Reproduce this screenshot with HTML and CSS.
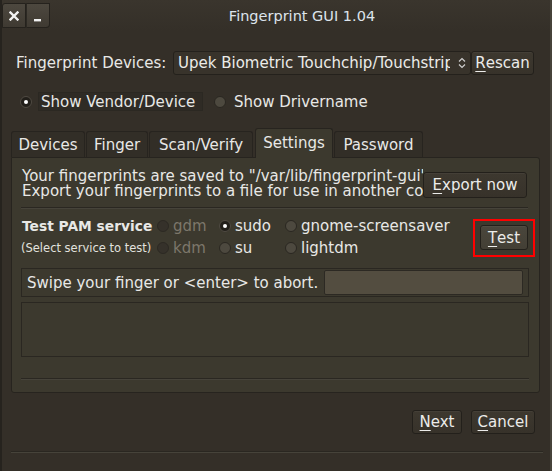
FILE: index.html
```html
<!DOCTYPE html>
<html>
<head>
<meta charset="utf-8">
<link rel="stylesheet" href="styles.css">
</head>
<body>
<div class="window">
  <div class="titlebar">
    <div class="tb-btns">
      <div class="tb-btn close">
        <svg width="10" height="10" viewBox="0 0 10 10"><path d="M1.5 1.5 L8.5 8.5 M8.5 1.5 L1.5 8.5" stroke="#f2f2f2" stroke-width="2.4" stroke-linecap="square"/></svg>
      </div>
      <div class="tb-btn min">
        <svg width="8" height="4" viewBox="0 0 8 4"><rect x="0" y="1" width="7" height="2.4" fill="#f2f2f2"/></svg>
      </div>
    </div>
    <div class="title">Fingerprint GUI 1.04</div>
  </div>

  <div class="body">
    <div class="dev-row">
      <span class="dev-label">Fingerprint Devices:</span>
      <div class="combo">
        <span class="combo-text">Upek Biometric Touchchip/Touchstrip</span>
        <svg class="combo-arrows" width="8" height="14" viewBox="0 0 8 14"><path d="M1 5.5 L4 2.5 L7 5.5" fill="none" stroke="#cfcfcf" stroke-width="1.2"/><path d="M1 8.5 L4 11.5 L7 8.5" fill="none" stroke="#cfcfcf" stroke-width="1.2"/></svg>
      </div>
      <div class="btn rescan"><u>R</u>escan</div>
    </div>

    <div class="radio-row">
      <span class="radio checked"></span><span class="radio-label focus">Show Vendor/Device</span>
      <span class="radio"></span><span class="radio-label">Show Drivername</span>
    </div>

    <div class="tabs">
      <div class="tab t-devices">Devices</div>
      <div class="tab t-finger">Finger</div>
      <div class="tab t-scan">Scan/Verify</div>
      <div class="tab active t-settings">Settings</div>
      <div class="tab t-password">Password</div>
    </div>

    <div class="tabpage">
      <div class="export-row">
        <div class="export-text">
          <div class="line">Your fingerprints are saved to "/var/lib/fingerprint-gui"</div>
          <div class="line">Export your fingerprints to a file for use in another computer</div>
        </div>
        <div class="btn export"><u>E</u>xport now</div>
      </div>
      <div class="hsep sep1"></div>

      <div class="pam-row">
        <div class="pam-grid">
          <div class="pam-title">Test PAM service</div>
          <div class="opt disabled"><span class="radio dis"></span><span>gdm</span></div>
          <div class="opt"><span class="radio checked"></span><span>sudo</span></div>
          <div class="opt"><span class="radio"></span><span>gnome-screensaver</span></div>
          <div class="pam-sub">(Select service to test)</div>
          <div class="opt disabled"><span class="radio dis"></span><span>kdm</span></div>
          <div class="opt"><span class="radio"></span><span>su</span></div>
          <div class="opt"><span class="radio"></span><span>lightdm</span></div>
        </div>
        <div class="test-wrap">
          <div class="btn test"><u>T</u>est</div>
        </div>
      </div>

      <div class="swipe-frame">
        <span class="swipe-text">Swipe your finger or &lt;enter&gt; to abort.</span>
        <div class="entry"></div>
      </div>

      <div class="frame-box"></div>

      <div class="hsep sep2"></div>
    </div>

    <div class="actions">
      <div class="btn next"><u>N</u>ext</div>
      <div class="btn cancel"><u>C</u>ancel</div>
    </div>
    <div class="hsep bottom-sep"></div>
  </div>
</div>
</body>
</html>
```

FILE: styles.css
```css
* { box-sizing: border-box; }
html, body {
  margin: 0;
  padding: 0;
  background: #332f28;
}
body {
  font-family: "DejaVu Sans", sans-serif;
  font-size: 15px;
  color: #e8e8e6;
}
.window {
  width: 552px;
  height: 471px;
  background: #342f28;
  border-left: 2px solid #26231e;
  border-right: 2px solid #46423a;
  overflow: hidden;
  display: flex;
  flex-direction: column;
}

/* title bar */
.titlebar {
  height: 31px;
  display: flex;
  align-items: flex-start;
  background: linear-gradient(#3a352d, #342f28);
  flex-shrink: 0;
}
.tb-btns {
  display: flex;
  margin-top: 3px;
}
.tb-btn {
  width: 24px;
  height: 25px;
  background: linear-gradient(#4d483f, #3f3a32);
  border: 1px solid #25221d;
  display: flex;
  align-items: center;
  justify-content: center;
}
.tb-btn.close { border-radius: 3px 0 0 0; width: 24px; }
.tb-btn.min { border-left: 1px solid #2c2923; border-radius: 0 0 4px 0; align-items: flex-end; padding-bottom: 5px; }
.title {
  flex: 1;
  text-align: center;
  margin-top: 8px;
  font-family: "DejaVu Sans", sans-serif;
  font-size: 14.5px;
  color: #dde4ec;
  padding-left: 4px;
}

.body {
  flex: 1;
  display: flex;
  flex-direction: column;
  padding-left: 9px;
}

/* devices row */
.dev-row {
  display: flex;
  align-items: center;
  margin-top: 20px;
  height: 24px;
}
.dev-label {
  margin-left: 5px;
  width: 157px;
  white-space: nowrap;
}
.combo {
  width: 298px;
  height: 24px;
  border: 1px solid #24211c;
  border-radius: 3px;
  background: #38332b;
  display: flex;
  align-items: center;
  padding-left: 4px;
  padding-right: 4px;
  overflow: hidden;
}
.combo-text {
  flex: 1;
  white-space: nowrap;
  overflow: hidden;
  color: #ecece9;
}
.combo-arrows { flex-shrink: 0; margin-left: 8px; }

.btn {
  height: 25px;
  border: 1px solid #23201b;
  border-radius: 3px;
  background: linear-gradient(#3d382f, #37322a);
  display: flex;
  align-items: center;
  justify-content: center;
  white-space: nowrap;
  color: #ececea;
  box-shadow: inset 0 1px 0 rgba(255,255,255,0.04);
  flex-shrink: 0;
}
.btn u { text-underline-offset: 3px; }
.rescan { width: 63px; height: 24px; }

/* radio row */
.radio-row {
  display: flex;
  align-items: center;
  margin-top: 17px;
  height: 19px;
}
.radio {
  display: inline-block;
  width: 12px;
  height: 12px;
  border-radius: 50%;
  background: #4d493f;
  border: 1px solid #2a2721;
  flex-shrink: 0;
  position: relative;
}
.radio.checked {
  background: #221f1a;
  border-color: #4f4a42;
}
.radio.checked::after {
  content: "";
  position: absolute;
  left: 3px;
  top: 3px;
  width: 4px;
  height: 4px;
  border-radius: 50%;
  background: #ffffff;
}
.radio.dis {
  background: #35312a;
  border-color: #2c2923;
}
.radio-row .radio:first-child { margin-left: 9px; }
.radio-label { white-space: nowrap; }
.radio-label.focus {
  margin-left: 6px;
  padding: 0 2px;
  height: 19px;
  line-height: 18px;
  background: #2f2b25;
  border: 1px solid #2b2822;
  width: 165px;
}
.radio-row .radio:nth-child(3) { margin-left: 11px; }
.radio-row .radio-label:last-child { margin-left: 8px; }

/* tabs */
.tabs {
  display: flex;
  align-items: flex-end;
  margin-top: 17px;
  height: 29px;
  position: relative;
  z-index: 1;
}
.tab {
  height: 26px;
  background: #322e27;
  border: 1px solid #27241f;
  border-bottom: none;
  border-radius: 3px 3px 0 0;
  display: flex;
  align-items: center;
  justify-content: center;
  margin-right: 1px;
  color: #e8e8e6;
  white-space: nowrap;
}
.tab.active {
  height: 30px;
  margin-bottom: -1px;
  background: #3c392e;
  padding-bottom: 2px;
}
.t-devices { width: 74px; }
.t-finger { width: 62px; }
.t-scan { width: 104px; }
.t-settings { width: 78px; margin-left: 1px; }
.t-password { width: 89px; }

.tabpage {
  width: 529px;
  height: 236px;
  background: #3c392e;
  border: 1px solid #27241f;
  border-radius: 0 3px 3px 3px;
  padding: 0 4px 0 9px;
  display: flex;
  flex-direction: column;
}

.export-row {
  display: flex;
  align-items: center;
  margin-top: 10px;
  height: 32px;
}
.export-text {
  width: 402px;
  overflow: hidden;
  white-space: nowrap;
  padding-left: 1px;
  flex-shrink: 0;
}
.export-text .line {
  height: 15.5px;
  line-height: 15.5px;
}
.export { width: 104px; height: 26px; margin-top: 1px; }

.hsep {
  height: 2px;
  border-top: 1px solid #2a2721;
  border-bottom: 1px solid #46433a;
  flex-shrink: 0;
}
.sep1 { margin-top: 7px; width: 507px; }

.pam-row {
  display: flex;
  align-items: center;
  margin-top: 8px;
  height: 40px;
}
.pam-grid {
  display: grid;
  grid-template-columns: 136px 62px 66px 170px;
  grid-template-rows: 21px 22px;
  align-items: center;
  flex-shrink: 0;
}
.pam-title {
  font-weight: bold;
  font-size: 13.8px;
  padding-left: 1px;
  white-space: nowrap;
}
.pam-sub {
  font-size: 11.5px;
  white-space: nowrap;
  color: #e2e2df;
}
.opt {
  display: flex;
  align-items: center;
  white-space: nowrap;
}
.opt .radio { margin-right: 4px; margin-left: 0px; }
.opt.disabled { color: #7c776b; }
.test-wrap {
  margin-left: 18px;
  width: 62px;
  height: 38px;
  border: 2px solid #ff0000;
  display: flex;
  align-items: center;
  justify-content: center;
  margin-top: 1px;
  flex-shrink: 0;
}
.test {
  width: 48px;
  height: 25px;
  background: linear-gradient(#4a463c, #433f35);
}

.swipe-frame {
  margin-top: 11px;
  width: 508px;
  height: 29px;
  border: 1px solid #2a2721;
  display: flex;
  align-items: center;
  padding-left: 5px;
  padding-right: 5px;
  flex-shrink: 0;
}
.swipe-text {
  width: 298px;
  white-space: nowrap;
}
.entry {
  width: 199px;
  height: 25px;
  background: #534d40;
  border: 1px solid #2c2923;
  border-radius: 2px;
}

.frame-box {
  margin-top: 5px;
  width: 508px;
  height: 55px;
  border: 1px solid #2a2721;
  flex-shrink: 0;
}
.sep2 { margin-top: 21px; width: 508px; }

.actions {
  display: flex;
  justify-content: flex-end;
  margin-top: 17px;
  padding-right: 15px;
  gap: 9px;
}
.next { width: 50px; height: 24px; }
.cancel { width: 64px; height: 24px; }

.bottom-sep {
  margin-top: 17px;
  width: 532px;
}
```
